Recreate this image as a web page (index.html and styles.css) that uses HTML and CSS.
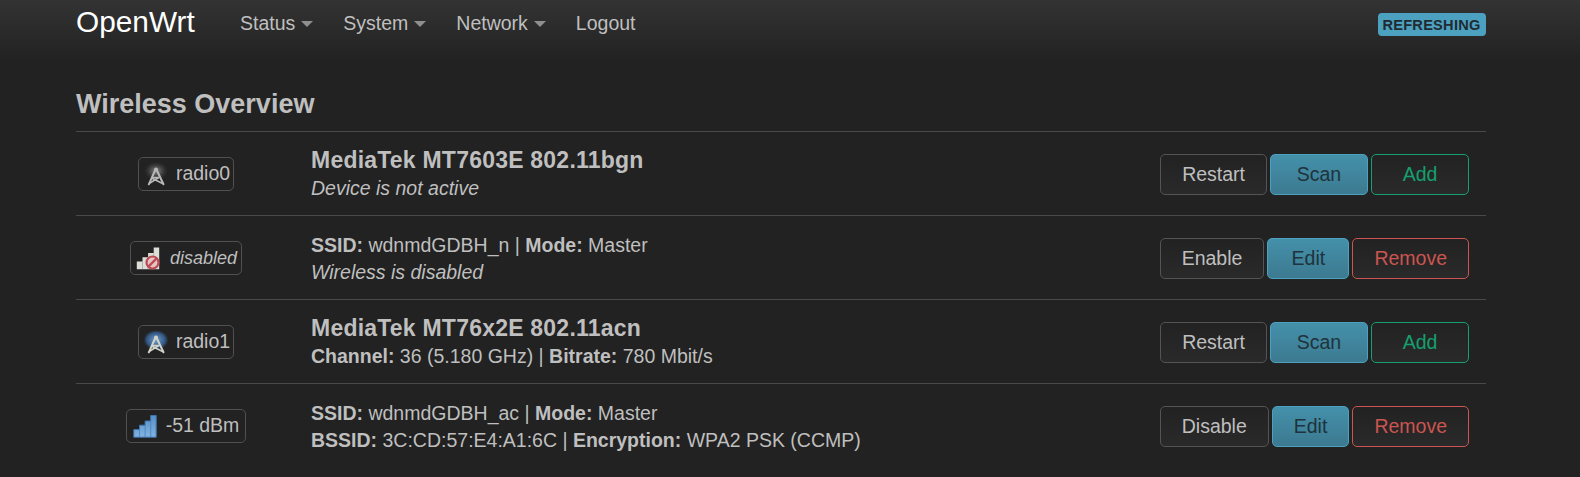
FILE: index.html
```html
<!DOCTYPE html>
<html lang="en">
<head>
<meta charset="utf-8">
<title>OpenWrt - Wireless</title>
<link rel="stylesheet" href="styles.css">
</head>
<body>
<svg class="defs" width="0" height="0" aria-hidden="true">
  <defs>
    <radialGradient id="glow-gray"><stop offset="0" stop-color="#888"/><stop offset=".5" stop-color="#505050" stop-opacity=".8"/><stop offset="1" stop-color="#333" stop-opacity="0"/></radialGradient>
    <radialGradient id="glow-blue"><stop offset="0" stop-color="#6f9fd4"/><stop offset=".75" stop-color="#31547f"/><stop offset="1" stop-color="#2a4468" stop-opacity="0"/></radialGradient>
    <linearGradient id="bar-blue" x2="0" y2="1"><stop offset="0" stop-color="#5590c8"/><stop offset="1" stop-color="#82b3e2"/></linearGradient>
    <g id="mast" fill="none" stroke-linecap="round" stroke-linejoin="round">
      <path d="M11.300 8 4.800 22.300M12.700 8 19.500 22.300" stroke-width="2"/>
      <path d="M8.500 15.500h6.300L6 21M8.500 16.500 18.500 21.500" stroke-width="1.500"/>
      <circle cx="12" cy="7.500" r="1.100" stroke-width="1.800"/>
    </g>
    <path id="bars" d="M.8 23.200v-7.600h5.700v-4.400h5.600V7h5.600V1.500h5.500v21.700z"/>
  </defs>
</svg>
<header class="topbar">
  <a class="brand">OpenWrt</a>
  <nav class="menu">
    <a class="menu-item drop">Status</a>
    <a class="menu-item drop">System</a>
    <a class="menu-item drop">Network</a>
    <a class="menu-item">Logout</a>
  </nav>
  <span class="indicator">REFRESHING</span>
</header>
<main class="content">
  <h2 class="heading">Wireless Overview</h2>
  <section class="row">
    <div class="state"><span class="badge"><svg class="icon" viewBox="0 0 24 24"><ellipse cx="12" cy="9" rx="12" ry="9.500" fill="url(#glow-gray)"/><use href="#mast" stroke="#b8b8b8"/></svg><span class="label">radio0</span></span></div>
    <div class="info"><div class="device">MediaTek MT7603E 802.11bgn</div><div><em>Device is not active</em></div></div>
    <div class="actions"><button class="btn">Restart</button><button class="btn primary wide">Scan</button><button class="btn positive wide">Add</button></div>
  </section>
  <section class="row">
    <div class="state"><span class="badge off"><svg class="icon" viewBox="0 0 24 24"><use href="#bars" fill="#deded9"/><path d="M6.500 16v7M12.100 11v12M17.700 7v16" stroke="#aaa" stroke-width=".8"/><circle cx="16.500" cy="16.500" r="6" fill="#e5c4c4" stroke="#bd4a55" stroke-width="2.200"/><path d="m12.400 20.600 8.200-8.200" stroke="#bd4a55" stroke-width="2.200"/></svg><em>disabled</em></span></div>
    <div class="info"><div><b>SSID:</b> wdnmdGDBH_n | <b>Mode:</b> Master</div><div><em>Wireless is disabled</em></div></div>
    <div class="actions"><button class="btn">Enable</button><button class="btn primary edit-wide">Edit</button><button class="btn negative">Remove</button></div>
  </section>
  <section class="row">
    <div class="state"><span class="badge"><svg class="icon" viewBox="0 0 24 24"><ellipse cx="12" cy="10" rx="12.500" ry="10" fill="url(#glow-blue)"/><use href="#mast" stroke="#d2d2c8"/></svg><span class="label">radio1</span></span></div>
    <div class="info"><div class="device">MediaTek MT76x2E 802.11acn</div><div><b>Channel:</b> 36 (5.180 GHz) | <b>Bitrate:</b> 780 Mbit/s</div></div>
    <div class="actions"><button class="btn">Restart</button><button class="btn primary wide">Scan</button><button class="btn positive wide">Add</button></div>
  </section>
  <section class="row">
    <div class="state"><span class="badge signal"><svg class="icon" viewBox="0 0 24 24"><use href="#bars" fill="url(#bar-blue)" stroke="#3f74ad"/><path d="M6.500 16v7M12.100 11v12M17.700 7v16" stroke="#4a80b8" stroke-width=".8"/></svg><span class="label">-51 dBm</span></span></div>
    <div class="info"><div><b>SSID:</b> wdnmdGDBH_ac | <b>Mode:</b> Master</div><div><b>BSSID:</b> 3C:CD:57:E4:A1:6C | <b>Encryption:</b> WPA2 PSK (CCMP)</div></div>
    <div class="actions"><button class="btn">Disable</button><button class="btn primary">Edit</button><button class="btn negative">Remove</button></div>
  </section>
</main>
</body>
</html>
```
FILE: styles.css
```css
* { box-sizing: border-box; }
body {
  margin: 0;
  height: 477px;
  overflow: hidden;
  background: #222;
  color: #bfbfbf;
  font: 19.5px/27px "Liberation Sans", Arial, sans-serif;
}
.defs { display: block; height: 0; }
.topbar {
  display: flex;
  align-items: flex-start;
  height: 60px;
  padding: 0 94px 0 76px;
  background: linear-gradient(#333, #222);
}
.brand { width: 164px; padding-top: 8px; color: #fff; font-size: 29.8px; }
.menu { display: flex; flex: 1; gap: 30px; padding-top: 10px; }
.menu-item { display: flex; align-items: center; color: #bfbfbf; }
.drop::after {
  content: "";
  margin: 1px 0 0 6px;
  border: 6px solid transparent;
  border-top-color: #8f8f8f;
  border-bottom: 0;
}
.indicator {
  width: 108px;
  height: 23px;
  margin-top: 13px;
  padding-right: 1px;
  border-radius: 4px;
  background: #4da1c0;
  color: #1f2b31;
  font-size: 14.6px;
  font-weight: bold;
  letter-spacing: 0.25px;
  line-height: 24px;
  text-align: center;
}
.content { padding: 0 94px 0 76px; }
.heading { margin: 0; height: 71px; padding-top: 31px; font-size: 27px; line-height: 27px; }
.row {
  display: grid;
  grid-template-columns: 220px 1fr auto;
  align-items: center;
  height: 84px;
  padding-right: 17px;
  border-top: 1px solid #494949;
}
.state { display: flex; justify-content: center; }
.badge {
  display: flex;
  align-items: center;
  height: 34px;
  padding: 0 3px 0 5px;
  border: 1px solid #505050;
  border-radius: 5px;
  line-height: 30px;
}
.label { padding-bottom: 2px; }
.icon { width: 24px; height: 24px; margin-right: 8px; }
.off { padding-right: 4px; font-size: 18px; }
.off .icon { margin-right: 10px; }
.signal { padding: 0 6px; }
.signal .icon { margin-right: 9px; }
.info { padding: 2px 0 0 15px; }
.device { height: 28px; font-size: 23px; font-weight: bold; letter-spacing: 0.22px; }
.actions { display: flex; gap: 3px; padding-top: 1px; }
.btn {
  height: 41px;
  padding: 0 21px;
  border: 1px solid #545454;
  border-radius: 5px;
  background: linear-gradient(#222, #2a2a2a);
  color: #bfbfbf;
  font: inherit;
}
.primary { border-color: #4da1c0; background: linear-gradient(#4490aa, #3c7a90); color: #1e333c; }
.positive { border-color: #14a06f; color: #14a06f; }
.negative { border-color: #cb5550; color: #cb5550; }
.wide { width: 98px; }
.edit-wide { width: 82px; padding: 0; }
```
